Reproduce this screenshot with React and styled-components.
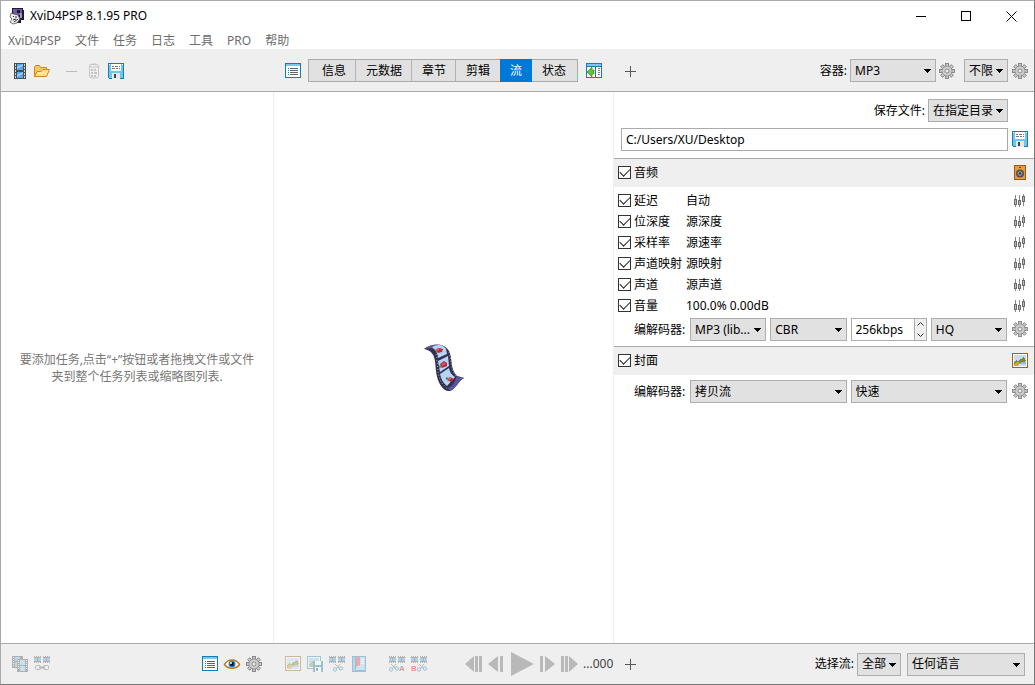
import React from 'react';
import styled, { createGlobalStyle, css } from 'styled-components';

const GlobalStyle = createGlobalStyle`
    * {
        box-sizing: border-box;
    }

    body {
        margin: 0;
        background-color: #fff;
    }

    body, button, input, select {
        font-family: "Noto Sans", "Noto Sans CJK SC", sans-serif;
        font-size: 12px;
        line-height: 18px;
        color: #000;
    }

    svg {
        overflow: visible;
    }
`;

const Window = styled.div`
    display: flex;
    flex-direction: column;
    min-height: 100vh;
    border: 1px solid #aaa;
    border-right-color: #777;
    border-bottom-color: #777;
`;

const TitleBar = styled.header`
    display: flex;
    align-items: center;
    height: 30px;
    padding-left: 8px;
    gap: 5px;
`;

const Title = styled.h1`
    flex: 1;
    margin: 0;
    font-size: 12px;
    font-weight: normal;
`;

const PlainButton = styled.button`
    display: flex;
    align-items: center;
    justify-content: center;
    padding: 0;
    border: 0;
    background: none;
`;

const WindowButtons = styled.div`
    display: flex;
`;

const WindowButton = styled(PlainButton)`
    width: 45px;
    height: 28px;
`;

const MenuBar = styled.nav`
    display: flex;
    height: 18px;
    padding-top: 1px;
    padding-left: 7px;
    gap: 14px;
`;

const MenuButton = styled(PlainButton)`
    color: #6d6d6d;
`;

const Columns = css`
    display: grid;
    grid-template-columns: minmax(0, 273fr) minmax(0, 340fr) minmax(0, 420fr);
`;

const ToolBar = styled.div`
    ${Columns}
    height: 43px;
    padding-top: 1px;
    background-color: #efefef;
    border-bottom: 1px solid #aaa;
`;

const Body = styled.main`
    ${Columns}
    flex: 1;
`;

const StatusBar = styled.footer`
    ${Columns}
    height: 41px;
    background-color: #efefef;
    border-top: 1px solid #aaa;
`;

const BarCell = styled.div`
    display: flex;
    align-items: center;
    padding-left: ${props => props.$left || 8}px;
    padding-right: ${props => props.$right || 0}px;
`;

const IconButton = styled(PlainButton)`
    flex: none;
    width: 22px;
    height: 22px;
    opacity: ${props => (props.$off ? 0.4 : 1)};
`;

const Spacer = styled.div`
    flex: ${props => (props.$width ? 'none' : 1)};
    width: ${props => props.$width || 0}px;
`;

const Tabs = styled.div`
    display: flex;
    height: 23px;
    margin: 0 5px 0 4px;
    padding: 0 1px 0 3px;
    border: 1px solid #aaa;
    background-color: #e1e1e1;
`;

const Tab = styled.button`
    margin: ${props => (props.$active ? '-1px 0' : '0')};
    padding: 0 ${props => (props.$line ? 9 : 10)}px 0 10px;
    border: 0;
    border-right: ${props => (props.$line ? '1px solid #b4b4b4' : '0')};
    background-color: ${props => (props.$active ? '#0078d7' : 'transparent')};
    color: ${props => (props.$active ? '#fff' : '#000')};
    white-space: nowrap;
`;

const SelectBox = styled.div`
    position: relative;
    flex: none;
    width: ${props => (props.$width ? props.$width + 'px' : 'auto')};
    grid-column: span ${props => props.$span || 1};

    svg {
        position: absolute;
        top: 10px;
        right: 5px;
        pointer-events: none;
    }
`;

const Select = styled.select`
    display: block;
    width: 100%;
    height: 23px;
    padding: 0 0 0 4px;
    border: 1px solid #adadad;
    border-radius: 0;
    background-color: #e1e1e1;
    appearance: none;
`;

const FieldLabel = styled.label`
    margin-right: 3px;
    white-space: nowrap;
`;

const TaskList = styled.section`
    display: flex;
    align-items: center;
    justify-content: center;
    border-right: 1px solid #eee;
`;

const Hint = styled.p`
    max-width: 244px;
    margin: 0;
    line-height: 17px;
    text-align: center;
    color: #787878;
`;

const Preview = styled.section`
    display: flex;
    align-items: center;
    justify-content: center;
    border-right: 1px solid #eee;
`;

const Settings = styled.section`
    display: flex;
    flex-direction: column;
`;

const SaveArea = styled.div`
    display: flex;
    flex-direction: column;
    gap: 6px;
    padding: 7px 3px 7px 7px;
`;

const SaveMode = styled.div`
    display: flex;
    align-items: center;
    justify-content: flex-end;
    padding-right: 23px;
`;

const PathRow = styled.div`
    display: flex;
    align-items: flex-start;
    gap: 1px;
`;

const PathInput = styled.input`
    flex: 1;
    min-width: 0;
    height: 23px;
    padding: 0 4px;
    border: 1px solid #aaa;
`;

const GroupHeader = styled.div`
    display: flex;
    align-items: center;
    height: 29px;
    padding: 0 3px 1px 4px;
    border-top: 1px solid #aaa;
    background-color: #efefef;
`;

const CheckLabel = styled.label`
    display: flex;
    align-items: center;
    gap: 3px;
    width: 68px;
    white-space: nowrap;
`;

const Check = styled.input`
    display: flex;
    flex: none;
    justify-content: center;
    width: 13px;
    height: 13px;
    margin: 0;
    border: 1px solid #333;
    background-color: #fff;
    appearance: none;

    &:checked::after {
        content: "";
        width: 9px;
        height: 5px;
        margin-top: 1px;
        border-left: 1px solid #222;
        border-bottom: 1px solid #222;
        transform: rotate(-45deg);
    }
`;

const Options = styled.div`
    padding-top: 3px;
`;

const OptionRow = styled.div`
    display: flex;
    align-items: center;
    height: 21px;
    padding: 0 3px 0 4px;
`;

const OptionValue = styled.span`
    flex: 1;
`;

const CodecRow = styled.div`
    display: flex;
    align-items: flex-start;
    gap: 2px;
    height: 23px;
    margin: ${props => props.$top}px 0 5px;
    padding: 0 3px 0 20px;
`;

const CodecLabel = styled.label`
    flex: none;
    width: 54px;
    line-height: 23px;
`;

const CodecFields = styled.div`
    display: grid;
    flex: 1;
    grid-template-columns: repeat(4, minmax(0, 1fr));
    gap: 4px;
`;

const SpinBox = styled.div`
    display: flex;
    height: 23px;
    border: 1px solid #adadad;
`;

const SpinInput = styled.input`
    flex: 1;
    width: 0;
    min-width: 0;
    padding: 0 0 0 4px;
    border: 0;
`;

const SpinButtons = styled.div`
    display: flex;
    flex-direction: column;
    width: 12px;
    border-left: 1px solid #adadad;
    background-color: #efefef;
`;

const SpinButton = styled(PlainButton)`
    flex: 1;
`;

const Transport = styled.div`
    display: flex;
    align-items: center;
    gap: 6px;
    margin-left: 35px;
`;

const Time = styled.span`
    margin-left: 5px;
    color: #444;
`;

const Svg = ({ w = 16, h = 16, children, smooth }) => (
    <svg width={w} height={h} viewBox={`0 0 ${w} ${h}`} fill="none" shapeRendering={smooth ? 'auto' : 'crispEdges'} aria-hidden="true">
        {children}
    </svg>
);

const Arrow = () => (
    <Svg w={7} h={4}><path d="M0 0h7v1H0zM1 1h5v1H1zM2 2h3v1H2zM3 3h1v1H3z" fill="#000" /></Svg>
);

const LogoIcon = () => (
    <Svg smooth>
        <path d="M3 0h11v2h1v10h-3v3H6L3 9z" fill="#201a30" />
        <path d="M4 1h9v3l-2 3H6L4 5z" fill="#6d5b9c" />
        <path d="M8 2h3v3H8z" fill="#181326" />
        <path d="M11 5h2v5h-2z" fill="#a394d0" />
        <path d="M2 5l3 1 4 1 2 4-3 4-4 1-3-2 2-3-2-2z" fill="#e9e9e9" stroke="#444" strokeWidth=".7" />
        <path d="M4 8l1 1M7 8v2M4 12l3-1M5 14l4-3" stroke="#333" />
    </Svg>
);

const FilmIcon = () => (
    <Svg>
        <path d="M2 0h12v16H2z" fill="#4c4c4c" />
        <path d="M5 1h6v6H5zM5 9h6v6H5z" fill="#55a8ee" />
        <path d="M5 3l6-2v2L5 6zM5 11l6-2v2l-6 3z" fill="#8cc8f8" />
        <path d="M3 1h1v2H3zM3 4h1v2H3zM3 7h1v2H3zM3 10h1v2H3zM3 13h1v2H3zM12 1h1v2h-1zM12 4h1v2h-1zM12 7h1v2h-1zM12 10h1v2h-1zM12 13h1v2h-1z" fill="#d5d5d5" />
    </Svg>
);

const FolderIcon = () => (
    <Svg smooth>
        <path d="M.5 13.500V3.500l1-1h4l1 2h6v3" fill="#f3c860" stroke="#c98a28" />
        <path d="M.5 13.500L3 8.500h4l2-2h6.500l-3 7z" fill="#ffe08a" stroke="#c98a28" />
        <path d="M3 10h10" stroke="#fff1bd" />
    </Svg>
);

const MinusIcon = () => <Svg><path d="M2 8h11v1H2z" fill="#bbb" /></Svg>;

const PlusIcon = () => <Svg><path d="M3 8h11v1H3zM8 3h1v11H8z" fill="#555" /></Svg>;

const BinIcon = () => (
    <Svg smooth>
        <path d="M3.500 2.500c0-2 9-2 9 0v11c0 2-9 2-9 0z" fill="#eee" stroke="#888" />
        <path d="M3.500 3c1 1.500 8 1.500 9 0M5 1.500h6" stroke="#888" />
        <path d="M5 6h2v2H5zM8 6h2v2H8zM5 9h2v2H5zM8 9h3v2H8zM5 12h2v2H5zM8 12h2v2H8z" fill="#888" />
    </Svg>
);

const SaveIcon = () => (
    <Svg>
        <path d="M0 0h16v16H1l-1-1z" fill="#147eaf" />
        <path d="M1 1h14v14H1z" fill="#70c5ef" />
        <path d="M3 1h10v7H3z" fill="#fff" />
        <path d="M4 3h2v1H4zM7 3h3v1H7zM11 3h1v1h-1zM4 5h3v1H4zM8 5h2v1H8zM11 5h1v1h-1z" fill="#777" />
        <path d="M4 10h8v6H4z" fill="#e8e8e8" />
        <path d="M6 11h2v4H6z" fill="#444" />
        <path d="M1 1h1v1H1zM14 1h1v1h-1z" fill="#fff" />
    </Svg>
);

const ListIcon = () => (
    <Svg>
        <path d="M0 0h16v15H0z" fill="#147db5" />
        <path d="M1 1h14v2H1z" fill="#77c9f3" />
        <path d="M1 3h14v11H1z" fill="#fff" />
        <path d="M3 5h1v1H3zM3 7h1v1H3zM3 9h1v1H3zM3 11h1v1H3z" fill="#277bb5" />
        <path d="M5 5h8v1H5zM5 7h8v1H5zM5 9h8v1H5zM5 11h8v1H5z" fill="#666" />
    </Svg>
);

const PanelIcon = () => (
    <Svg>
        <path d="M0 0h16v15H0z" fill="#147db5" />
        <path d="M1 1h14v2H1z" fill="#77c9f3" />
        <path d="M1 4h14v10H1z" fill="#fff" />
        <path d="M9 3h1v11H9z" fill="#147db5" />
        <path d="M12 5h2v1h-2zM12 7h2v1h-2zM12 9h2v1h-2zM12 11h2v1h-2z" fill="#777" />
        <path d="M1 9l5-5v3h2v4H6v3z" fill="#6fc31f" stroke="#397d0a" strokeWidth=".6" shapeRendering="auto" />
    </Svg>
);

const teeth = [0, 45, 90, 135, 180, 225, 270, 315];

const GearIcon = () => (
    <Svg smooth>
        {teeth.map(angle => (
            <rect key={angle} x="6.500" y=".5" width="3" height="4" fill="#c6c6c6" stroke="#808080" strokeWidth=".9" transform={`rotate(${angle} 8 8)`} />
        ))}
        <circle cx="8" cy="8" r="5" fill="#c6c6c6" stroke="#808080" strokeWidth=".6" />
        <circle cx="8" cy="8" r="4.300" fill="#cdcdcd" />
        <circle cx="8" cy="8" r="2" fill="#efefef" stroke="#8a8a8a" />
    </Svg>
);

const SlidersIcon = () => (
    <Svg>
        <path d="M3 2h1v12H3zM7 2h1v12H7zM11 1h1v12h-1z" fill="#888" />
        <path d="M2 6h3v6H2zM6 7h3v5H6zM10 3h3v6h-3z" fill="#6b6b6b" />
        <path d="M3 7h1v4H3zM7 8h1v3H7zM11 4h1v4h-1z" fill="#bbb" />
    </Svg>
);

const SpeakerIcon = () => (
    <Svg>
        <path d="M2 0h12v15H2z" fill="#95591a" />
        <path d="M3 1h10v13H3z" fill="#e79b3c" />
        <path d="M7 2h2v1H7z" fill="#5b4420" />
        <g shapeRendering="auto">
            <circle cx="8" cy="8.500" r="4" fill="#4a5055" />
            <circle cx="8" cy="8.500" r="2" fill="#888" stroke="#aaa" strokeWidth=".7" />
            <circle cx="8" cy="8.500" r="1" fill="#222" />
        </g>
    </Svg>
);

const ImageIcon = () => (
    <Svg>
        <path d="M0 0h16v15H0z" fill="#a2601e" />
        <path d="M1 1h14v13H1z" fill="#fff" />
        <path d="M2 2h12v11H2z" fill="#c3ddfa" />
        <path d="M2 9h12v2H2z" fill="#8fb9e4" />
        <path d="M2 9l2-2 2 1 3-2 2-2 2 1 1 3-3 1-4 1-2 3H2z" fill="#768b2b" />
        <path d="M2 11l3-2 3 1-2 3H2z" fill="#d0a33f" />
    </Svg>
);

const FilmsIcon = () => (
    <Svg>
        <path d="M0 0h11v12H0z" fill="#555" />
        <path d="M3 1h5v4H3zM3 6h5v5H3z" fill="#6dbbf3" />
        <path d="M1 1h1v1H1zM1 3h1v1H1zM1 5h1v1H1zM1 7h1v1H1zM1 9h1v1H1z" fill="#fff" />
        <path d="M5 3h11v13H5z" fill="#555" />
        <path d="M8 4h5v5H8zM8 10h5v5H8z" fill="#8dcbf7" />
        <path d="M6 4h1v1H6zM6 6h1v1H6zM6 8h1v1H6zM6 10h1v1H6zM6 12h1v1H6zM14 4h1v1h-1zM14 6h1v1h-1zM14 8h1v1h-1zM14 10h1v1h-1zM14 12h1v1h-1z" fill="#fff" />
    </Svg>
);

const Strip = () => (
    <>
        <path d="M0 0h7v7H0zM9 0h7v7H9z" fill="#555" />
        <path d="M0 2h3v3H0zM4 2h3v3H4zM9 2h3v3H9zM13 2h3v3h-3z" fill="#3fa9ee" />
        <path d="M1 0h1v1H1zM3 0h1v1H3zM5 0h1v1H5zM1 6h1v1H1zM3 6h1v1H3zM5 6h1v1H5zM10 0h1v1h-1zM12 0h1v1h-1zM14 0h1v1h-1zM10 6h1v1h-1zM12 6h1v1h-1zM14 6h1v1h-1z" fill="#eee" />
    </>
);

const LinkIcon = () => (
    <Svg>
        <Strip />
        <g shapeRendering="auto" stroke="#666">
            <rect x="1.500" y="9.500" width="5" height="4" rx="1" />
            <rect x="9.500" y="9.500" width="5" height="4" rx="1" />
            <path d="M5 11.500h6" strokeWidth="2" />
        </g>
    </Svg>
);

const EyeIcon = () => (
    <Svg smooth>
        <path d="M.5 8.500C4 2.500 12 2.500 15.500 8.500c-3.500 5-11.500 5-15 0z" fill="#fff" stroke="#c57d12" strokeWidth="1.500" />
        <circle cx="8" cy="8" r="3.500" fill="#2985c4" />
        <circle cx="8" cy="8" r="2" fill="#111" />
        <circle cx="7" cy="7" r="1" fill="#fff" />
    </Svg>
);

const SaveImageIcon = () => (
    <Svg>
        <path d="M0 0h14v13H0z" fill="#2688bd" />
        <path d="M1 1h12v11H1z" fill="#fff" />
        <path d="M2 2h10v9H2z" fill="#94cef5" />
        <path d="M2 8l4-3 3 3v3H2z" fill="#90a03f" />
        <path d="M6 5h10v11H6z" fill="#147db5" />
        <path d="M8 5h6v4H8zM8 11h6v5H8z" fill="#fff" />
        <path d="M9 12h2v3H9z" fill="#555" />
    </Svg>
);

const Scissors = () => (
    <g shapeRendering="auto" stroke="#1f7fc0">
        <path d="M6 8l5 5M11 8l-4 5" stroke="#666" />
        <circle cx="6" cy="13.500" r="1.700" />
        <circle cx="12" cy="12.500" r="1.700" />
    </g>
);

const CutIcon = () => <Svg><Strip /><Scissors /></Svg>;

// The letter marks which end of the fragment is cut
const MarkIcon = ({ letter }) => (
    <Svg>
        <Strip />
        <g transform={letter === 'A' ? 'translate(-4 0)' : 'translate(2 0)'}><Scissors /></g>
        <text x={letter === 'A' ? 10 : 0} y="15" fill="#f00010" fontFamily="Liberation Sans, sans-serif" fontSize="8" fontWeight="bold">{letter}</text>
    </Svg>
);

const BookIcon = () => (
    <Svg>
        <path d="M1 0h14v16H1z" fill="#287db6" />
        <path d="M2 1h2v14H2z" fill="#6bb6e6" />
        <path d="M5 1h9v13H5z" fill="#a3d2f2" />
        <path d="M5 1h4v10l-2-2-2 2z" fill="#e34a43" />
        <path d="M10 3h3v1h-3zM10 5h3v1h-3zM10 7h3v1h-3z" fill="#fff" />
    </Svg>
);

const PreviewFilm = () => (
    <Svg w={42} h={50} smooth>
        <path d="M1 6C7 1 21-1 26 8c4 9 1 18 8 25l7 2c-6 3-8 11-14 13-7 1-13-9-14-20C12 19 13 8 1 6z" fill="#34314f" />
        <path d="M1 6C7 1 17 0 22 4l-7 5C11 4 7 5 1 6zM34 33l7 2c-6 3-8 11-14 13l-2-3c6-2 7-8 9-12z" fill="#5d559a" />
        <path d="M9 4c5-3 11-3 14 2l1 5-9 4c0-4-2-8-6-11zM15 18l10-5 1 10-9 6zM17 31l9-6c1 5 3 7 6 9l-8 9c-4-3-6-7-7-12z" fill="#b4d5f6" />
        <path d="M12 7l4-2 4 1-1 3-4 1zM17 21l4-3 3 2v3l-5 2zM24 37l3-3 4 2-3 3z" fill="#b52c40" />
        <path d="M13 7l3-1M19 22l3-2M25 36l3-1" stroke="#ee5a5a" strokeWidth="2" />
        <path d="M16 24l3-1M23 35l2 1" stroke="#52815a" strokeWidth="2" />
        <path d="M13 11c3 13-1 26 12 35M26 9c3 10 1 18 8 25" stroke="#9ea4cb" strokeWidth="1" strokeDasharray="1 2" />
    </Svg>
);

const Combo = ({ id, label, value, width, span }) => (
    <SelectBox $width={width} $span={span}>
        <Select id={id} aria-label={label} defaultValue={value}>
            <option>{value}</option>
        </Select>
        <Arrow />
    </SelectBox>
);

const menus = ['XviD4PSP', '文件', '任务', '日志', '工具', 'PRO', '帮助'];

const tabs = ['信息', '元数据', '章节', '剪辑', '流', '状态'];

const audioOptions = [
    { name: '延迟', value: '自动' },
    { name: '位深度', value: '源深度' },
    { name: '采样率', value: '源速率' },
    { name: '声道映射', value: '源映射' },
    { name: '声道', value: '源声道' },
    { name: '音量', value: '100.0% 0.00dB' },
];

function App () {
    return (
        <>
            <GlobalStyle />
            <Window>
                <TitleBar>
                    <LogoIcon />
                    <Title>XviD4PSP 8.1.95 PRO</Title>
                    <WindowButtons>
                        <WindowButton aria-label="最小化">
                            <Svg w={11} h={11}><path d="M0 5h10v1H0z" fill="#000" /></Svg>
                        </WindowButton>
                        <WindowButton aria-label="最大化">
                            <Svg w={11} h={11}><path d="M.5 .5h9v9h-9z" stroke="#000" /></Svg>
                        </WindowButton>
                        <WindowButton aria-label="关闭">
                            <Svg w={11} h={11} smooth><path d="M.5 .5l10 10M10.500 .5l-10 10" stroke="#000" /></Svg>
                        </WindowButton>
                    </WindowButtons>
                </TitleBar>
                <MenuBar>
                    {menus.map(name => <MenuButton key={name}>{name}</MenuButton>)}
                </MenuBar>

                <ToolBar>
                    <BarCell>
                        <IconButton aria-label="添加文件"><FilmIcon /></IconButton>
                        <IconButton aria-label="打开文件夹"><FolderIcon /></IconButton>
                        <Spacer $width={8} />
                        <IconButton aria-label="移除"><MinusIcon /></IconButton>
                        <IconButton aria-label="清空" $off><BinIcon /></IconButton>
                        <IconButton aria-label="保存任务"><SaveIcon /></IconButton>
                    </BarCell>
                    <BarCell>
                        <IconButton aria-label="列表"><ListIcon /></IconButton>
                        <Tabs>
                            {tabs.map(name => (
                                <Tab key={name} $active={name === '流'} $line={tabs.indexOf(name) < 3}>{name}</Tab>
                            ))}
                        </Tabs>
                        <IconButton aria-label="面板"><PanelIcon /></IconButton>
                    </BarCell>
                    <BarCell $left={5} $right={3}>
                        <IconButton aria-label="添加"><PlusIcon /></IconButton>
                        <Spacer />
                        <FieldLabel htmlFor="container">容器:</FieldLabel>
                        <Combo id="container" value="MP3" width={86} />
                        <IconButton aria-label="容器设置"><GearIcon /></IconButton>
                        <Spacer $width={6} />
                        <Combo label="限制" value="不限" width={44} />
                        <Spacer $width={1} />
                        <IconButton aria-label="限制设置"><GearIcon /></IconButton>
                    </BarCell>
                </ToolBar>

                <Body>
                    <TaskList>
                        <Hint>要添加任务,点击“+”按钮或者拖拽文件或文件夹到整个任务列表或缩略图列表.</Hint>
                    </TaskList>
                    <Preview>
                        <PreviewFilm />
                    </Preview>
                    <Settings>
                        <SaveArea>
                            <SaveMode>
                                <FieldLabel htmlFor="savemode">保存文件:</FieldLabel>
                                <Combo id="savemode" value="在指定目录" width={80} />
                            </SaveMode>
                            <PathRow>
                                <PathInput aria-label="路径" defaultValue="C:/Users/XU/Desktop" />
                                <IconButton aria-label="选择目录"><SaveIcon /></IconButton>
                            </PathRow>
                        </SaveArea>

                        <GroupHeader>
                            <CheckLabel><Check type="checkbox" defaultChecked />音频</CheckLabel>
                            <Spacer />
                            <IconButton aria-label="音频"><SpeakerIcon /></IconButton>
                        </GroupHeader>
                        <Options>
                            {audioOptions.map(option => (
                                <OptionRow key={option.name}>
                                    <CheckLabel><Check type="checkbox" defaultChecked />{option.name}</CheckLabel>
                                    <OptionValue>{option.value}</OptionValue>
                                    <IconButton aria-label={option.name}><SlidersIcon /></IconButton>
                                </OptionRow>
                            ))}
                        </Options>
                        <CodecRow $top={2}>
                            <CodecLabel htmlFor="audiocodec">编解码器:</CodecLabel>
                            <CodecFields>
                                <Combo id="audiocodec" value="MP3 (lib..." />
                                <Combo label="模式" value="CBR" />
                                <SpinBox>
                                    <SpinInput aria-label="码率" defaultValue="256kbps" />
                                    <SpinButtons>
                                        <SpinButton aria-label="增加"><Svg w={7} h={4} smooth><path d="M.5 3.500l3-3 3 3" stroke="#333" /></Svg></SpinButton>
                                        <SpinButton aria-label="减少"><Svg w={7} h={4} smooth><path d="M.5 .5l3 3 3-3" stroke="#333" /></Svg></SpinButton>
                                    </SpinButtons>
                                </SpinBox>
                                <Combo label="质量" value="HQ" />
                            </CodecFields>
                            <IconButton aria-label="音频编码设置"><GearIcon /></IconButton>
                        </CodecRow>

                        <GroupHeader>
                            <CheckLabel><Check type="checkbox" defaultChecked />封面</CheckLabel>
                            <Spacer />
                            <IconButton aria-label="封面"><ImageIcon /></IconButton>
                        </GroupHeader>
                        <CodecRow $top={5}>
                            <CodecLabel htmlFor="covercodec">编解码器:</CodecLabel>
                            <CodecFields>
                                <Combo id="covercodec" value="拷贝流" span={2} />
                                <Combo label="速度" value="快速" span={2} />
                            </CodecFields>
                            <IconButton aria-label="封面编码设置"><GearIcon /></IconButton>
                        </CodecRow>
                    </Settings>
                </Body>

                <StatusBar>
                    <BarCell $right={9}>
                        <IconButton aria-label="合并" $off><FilmsIcon /></IconButton>
                        <IconButton aria-label="链接" $off><LinkIcon /></IconButton>
                        <Spacer />
                        <IconButton aria-label="任务列表"><ListIcon /></IconButton>
                        <IconButton aria-label="预览"><EyeIcon /></IconButton>
                        <IconButton aria-label="设置"><GearIcon /></IconButton>
                    </BarCell>
                    <BarCell>
                        <IconButton aria-label="图片" $off><ImageIcon /></IconButton>
                        <IconButton aria-label="保存图片" $off><SaveImageIcon /></IconButton>
                        <IconButton aria-label="剪切" $off><CutIcon /></IconButton>
                        <IconButton aria-label="章节" $off><BookIcon /></IconButton>
                        <Spacer $width={16} />
                        <IconButton aria-label="起点" $off><MarkIcon letter="A" /></IconButton>
                        <IconButton aria-label="终点" $off><MarkIcon letter="B" /></IconButton>
                        <Transport>
                            <PlainButton aria-label="上一关键帧"><Svg w={17} h={16} smooth><path d="M0 8l9-8v16zM10 0h3v16h-3zM14 0h3v16h-3z" fill="#b9b9b9" /></Svg></PlainButton>
                            <PlainButton aria-label="上一帧"><Svg w={15} h={16} smooth><path d="M0 8l10-8v16zM12 0h3v16h-3z" fill="#b9b9b9" /></Svg></PlainButton>
                            <PlainButton aria-label="播放"><Svg w={25} h={24} smooth><path d="M2 0l23 12L2 24z" fill="#b9b9b9" /></Svg></PlainButton>
                            <PlainButton aria-label="下一帧"><Svg w={15} h={16} smooth><path d="M15 8L5 0v16zM0 0h3v16H0z" fill="#b9b9b9" /></Svg></PlainButton>
                            <PlainButton aria-label="下一关键帧"><Svg w={17} h={16} smooth><path d="M17 8L8 0v16zM0 0h3v16H0zM4 0h3v16H4z" fill="#b9b9b9" /></Svg></PlainButton>
                        </Transport>
                        <Time>...000</Time>
                    </BarCell>
                    <BarCell $left={5} $right={9}>
                        <IconButton aria-label="添加流"><PlusIcon /></IconButton>
                        <Spacer />
                        <FieldLabel htmlFor="streams">选择流:</FieldLabel>
                        <Combo id="streams" value="全部" width={44} />
                        <Spacer $width={6} />
                        <Combo label="语言" value="任何语言" width={118} />
                    </BarCell>
                </StatusBar>
            </Window>
        </>
    );
}

export default App;
